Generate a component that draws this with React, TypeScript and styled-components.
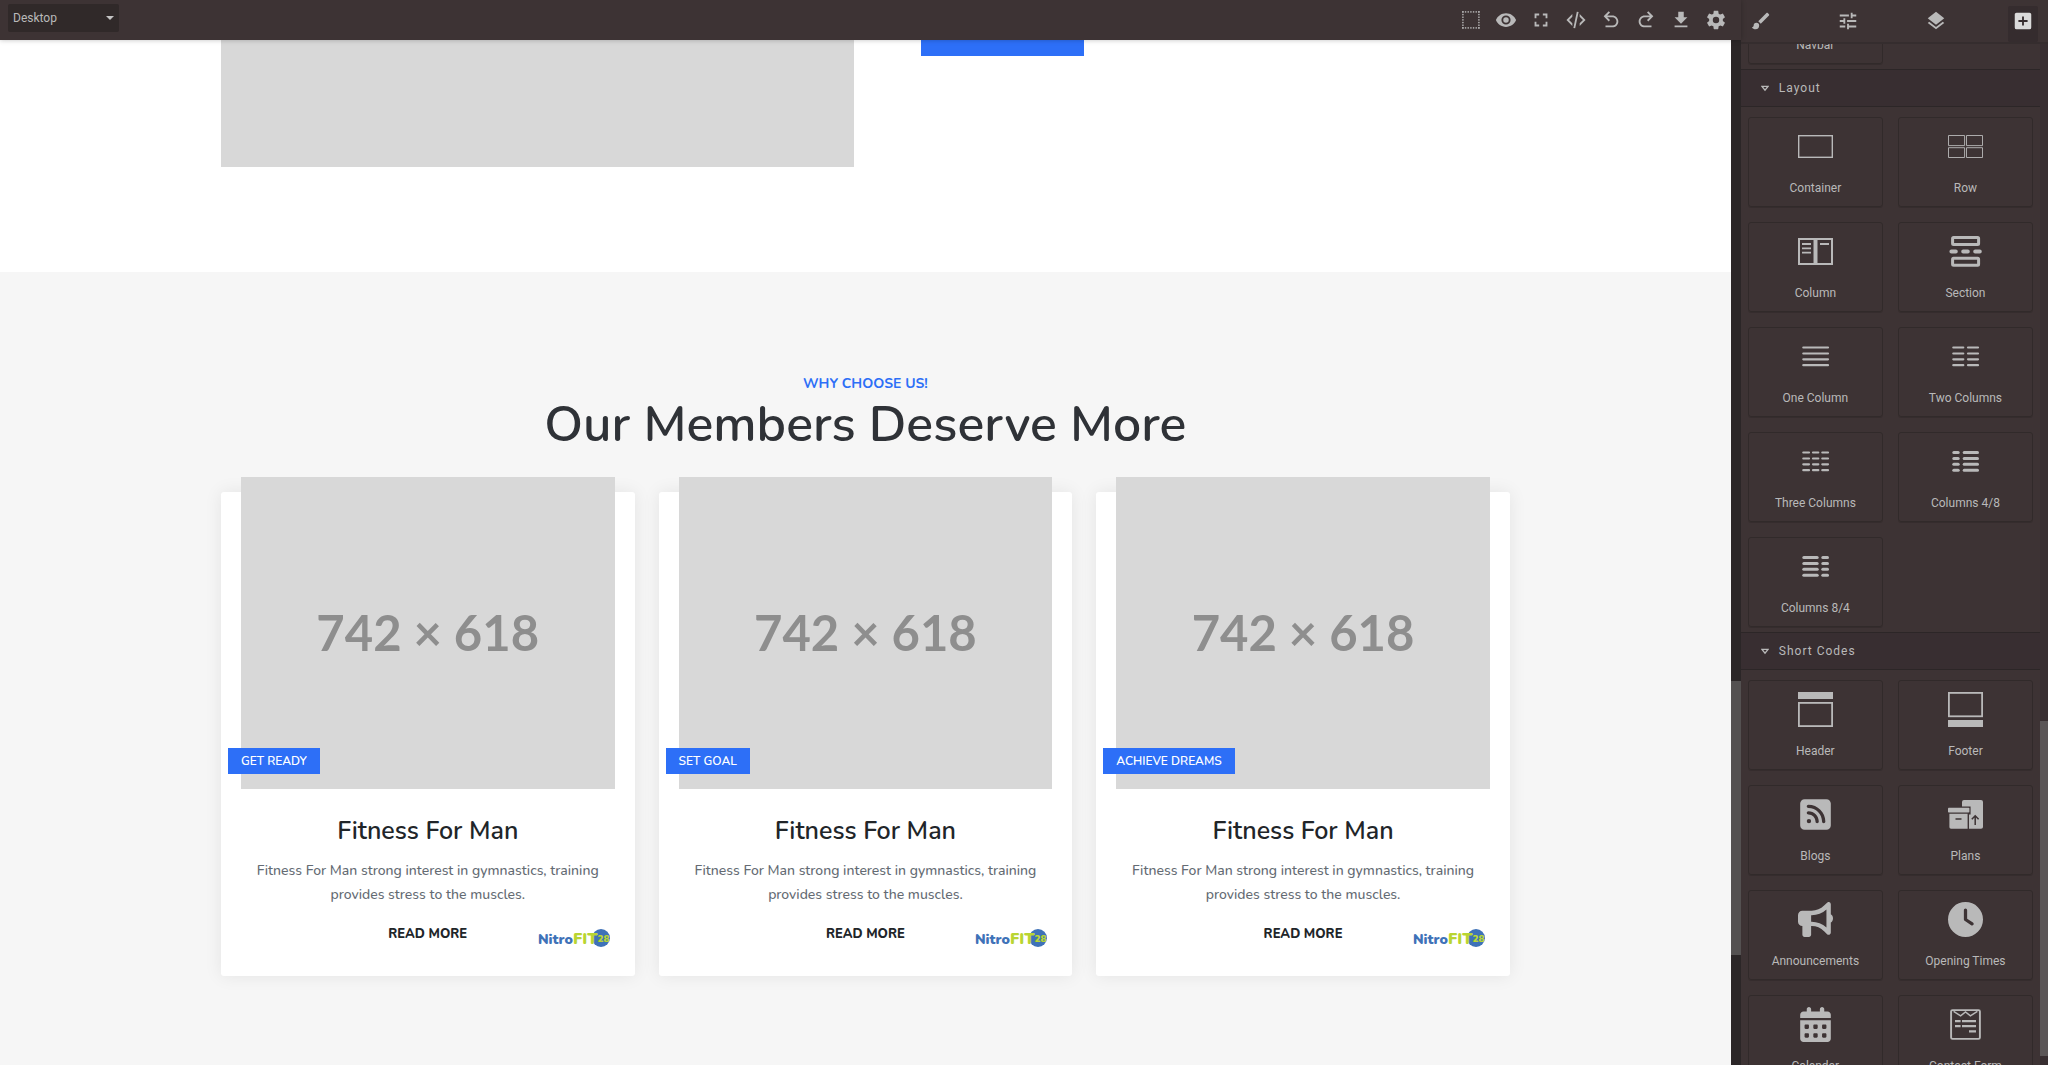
import React from "react";
import styled, { createGlobalStyle } from "styled-components";
import { FaBullhorn, FaCalendarDays, FaClock, FaSquareRss } from "react-icons/fa6";

const siteFont = `Nunito, Lato, "Open Sans", sans-serif`;
const uiFont = `Roboto, "Liberation Sans", sans-serif`;

const GlobalStyle = createGlobalStyle`
  *, *::before, *::after { box-sizing: border-box; }
  body { margin: 0; background: #3d3334; overflow: hidden; }
  h2, h3, p { margin: 0; }
`;

/* ---------- editor shell ---------- */

const Editor = styled.div`
  display: grid;
  grid-template-columns: minmax(0, 1fr) 15%;
  height: 100vh;
  background: #3d3334;
  color: #b9b9b9;
  font-family: ${uiFont};
  font-size: 12px;
`;

const Workspace = styled.div`
  display: flex;
  flex-direction: column;
  min-width: 0;
  min-height: 0;
`;

const Toolbar = styled.header`
  display: flex;
  flex: none;
  align-items: center;
  justify-content: space-between;
  height: 40px;
  padding: 0 14px 0 8px;
  background: #3d3334;
  box-shadow: 0 0 5px rgba(0, 0, 0, 0.25);
  z-index: 1;
`;

const DeviceField = styled.label`
  display: flex;
  align-items: center;
  width: 111px;
  height: 28px;
  margin-bottom: 4px;
  padding-right: 5px;
  border-radius: 2px;
  background: #302929;
`;

const DeviceSelect = styled.select`
  flex: 1;
  min-width: 0;
  padding: 0 0 0 5px;
  border: 0;
  outline: 0;
  appearance: none;
  background: transparent;
  color: #b9b9b9;
  font: 12px ${uiFont};
`;

const Caret = styled.span`
  border: 4px solid transparent;
  border-top-color: #c4c4c4;
  border-bottom-width: 0;
`;

const Tools = styled.div`
  display: flex;
  gap: 13px;
`;

const IconButton = styled.button`
  display: flex;
  padding: 0;
  border: 0;
  background: none;
  color: #b9b9b9;
`;

const TabButton = styled(IconButton)<{ $active?: boolean }>`
  padding: 4px;
  border-radius: 2px;
  background: ${(p) => (p.$active ? "#352c2e" : "transparent")};
  color: ${(p) => (p.$active ? "#dadada" : "#b9b9b9")};
`;

const Viewport = styled.div`
  display: flex;
  flex: 1;
  min-height: 0;
`;

const Track = styled.div<{ $size: number; $rows: string; $color: string }>`
  display: grid;
  flex: none;
  width: ${(p) => p.$size}px;
  grid-template-rows: ${(p) => p.$rows};
  background: ${(p) => p.$color};
`;

const Thumb = styled.div<{ $color: string }>`
  grid-row: 2;
  background: ${(p) => p.$color};
`;

/* ---------- edited page ---------- */

const Page = styled.main`
  flex: 1;
  min-width: 0;
  overflow: hidden;
  background: #fff;
  color: #212529;
  font-family: ${siteFont};
`;

const Container = styled.div`
  width: 100%;
  max-width: 1289px;
  margin: 0 auto;
`;

const Hero = styled.section`
  padding-bottom: 105px;
`;

const HeroRow = styled(Container)`
  display: grid;
  grid-template-columns: 633fr 589fr;
  gap: 67px;
  align-items: start;
`;

const HeroImage = styled.div`
  height: 127px;
  background: #d8d8d8;
`;

const HeroButton = styled.button`
  width: 163px;
  height: 16px;
  padding: 0;
  border: 0;
  background: #2d6ff7;
`;

const Features = styled.section`
  min-height: 800px;
  padding-top: 102px;
  background: #f6f6f6;
  text-align: center;
`;

const Eyebrow = styled.p`
  color: #2d6ff7;
  font-size: 14px;
  font-weight: 700;
  line-height: 20px;
`;

const Title = styled.h2`
  color: #2f3237;
  font-size: 50px;
  font-weight: 650;
  line-height: 62px;
`;

const Cards = styled.div`
  display: grid;
  grid-template-columns: repeat(3, minmax(0, 1fr));
  gap: 24px;
  margin-top: 36px;
`;

const Card = styled.article`
  padding: 0 20px 27px;
  border-radius: 3px;
  background: #fff;
  box-shadow: 0 0 18px rgba(0, 0, 0, 0.08);
`;

const Placeholder = styled.div`
  position: relative;
  display: flex;
  align-items: center;
  justify-content: center;
  margin-top: -15px;
  padding-bottom: 2px;
  aspect-ratio: 374 / 312;
  background: #d8d8d8;
  color: #8e8e8e;
  font: 700 49px Lato, sans-serif;
`;

const Badge = styled.span`
  position: absolute;
  bottom: 15px;
  left: -13px;
  padding: 0 13px;
  background: #2d6ff7;
  color: #fff;
  font: 600 12px/26px ${siteFont};
`;

const CardTitle = styled.h3`
  margin-top: 27px;
  font-size: 25px;
  font-weight: 650;
  line-height: 30px;
`;

const CardText = styled.p`
  margin-top: 13px;
  color: #646b73;
  font-size: 14px;
  font-weight: 500;
  line-height: 24px;
`;

const CardFooter = styled.div`
  display: grid;
  grid-template-columns: 1fr auto 1fr;
  height: 27px;
  margin-top: 15px;
`;

const ReadMore = styled.a`
  grid-column: 2;
  color: #212529;
  font-size: 13px;
  font-weight: 800;
  line-height: 24px;
  text-decoration: none;
`;

const LogoSvg = styled.svg`
  align-self: end;
  justify-self: end;
  margin-right: 5px;
  overflow: visible;
`;

const Logo = () => (
  <LogoSvg width="72" height="22" viewBox="0 -2 72 22" aria-label="NitroFIT28">
    <circle cx="63" cy="9" r="9" fill="#3f72b8" />
    <text x="0" y="15" fontFamily={siteFont} fontWeight="900" fontSize="14" fill="#3f72b8">
      Nitro
      <tspan fill="#b9d532" fontSize="16">FIT</tspan>
      <tspan fill="#b9d532" fontSize="10" dy="-2">28</tspan>
    </text>
  </LogoSvg>
);

/* ---------- side panel ---------- */

const Panel = styled.aside`
  display: flex;
  flex-direction: column;
  min-width: 0;
  min-height: 0;
`;

const Tabs = styled.nav`
  display: flex;
  flex: none;
  justify-content: space-between;
  height: 44px;
  padding: 6px 10px 0 5px;
  border-bottom: 2px solid #352d2e;
`;

const PanelBody = styled.div`
  display: flex;
  flex: 1;
  min-height: 0;
`;

const Blocks = styled.div`
  flex: 1;
  min-width: 0;
  overflow: hidden;
`;

const Clipped = styled.div`
  display: flex;
  flex-direction: column;
  justify-content: flex-end;
  height: 25px;
`;

const CategoryTitle = styled.h3`
  display: flex;
  align-items: center;
  gap: 10px;
  height: 38px;
  padding-left: 20px;
  border: solid #2c2627;
  border-width: 1px 0;
  background: #382e31;
  font-size: 12px;
  font-weight: 400;
  letter-spacing: 1px;
`;

const BlockGrid = styled.div`
  display: grid;
  grid-template-columns: repeat(2, minmax(0, 1fr));
  gap: 15px;
  padding: 10px 7px 5px;
`;

const Block = styled.button`
  display: flex;
  flex-direction: column;
  align-items: center;
  justify-content: flex-end;
  gap: 16px;
  height: 90px;
  padding: 11px 0 10px;
  border: 1px solid #312a2a;
  border-radius: 3px;
  background: none;
  box-shadow: 0 1px 0 rgba(0, 0, 0, 0.12);
  color: #b9b9b9;
  font: 12px/16px ${uiFont};
`;

/* ---------- icons ---------- */

const Mdi = ({ d }: { d: string }) => (
  <svg width="22" height="22" viewBox="0 0 24 24" fill="currentColor" aria-hidden="true">
    <path d={d} />
  </svg>
);

const dots = [0, 1, 2, 3, 4, 5, 6].map((n) => 2.2 + (n * 16) / 6);

const OutlineIcon = () => (
  <svg width="22" height="22" viewBox="0 0 22 22" fill="currentColor" aria-hidden="true">
    {dots.map((at) => (
      <g key={at}>
        <rect x={at} y="2.2" width="1.4" height="1.4" />
        <rect x={at} y="18.2" width="1.4" height="1.4" />
        <rect x="2.2" y={at} width="1.4" height="1.4" />
        <rect x="18.2" y={at} width="1.4" height="1.4" />
      </g>
    ))}
  </svg>
);

const tools: [string, string][] = [
  ["Preview", "M12,9A3,3 0 0,0 9,12A3,3 0 0,0 12,15A3,3 0 0,0 15,12A3,3 0 0,0 12,9M12,17A5,5 0 0,1 7,12A5,5 0 0,1 12,7A5,5 0 0,1 17,12A5,5 0 0,1 12,17M12,4.5C7,4.5 2.73,7.61 1,12C2.73,16.39 7,19.5 12,19.5C17,19.5 21.27,16.39 23,12C21.27,7.61 17,4.5 12,4.5Z"],
  ["Fullscreen", "M5,5H10V7H7V10H5V5M14,5H19V10H17V7H14V5M17,14H19V19H14V17H17V14M10,17V19H5V14H7V17H10Z"],
  ["View code", "M12.89,3L14.85,3.4L11.11,21L9.15,20.6L12.89,3M19.59,12L16,8.41V5.58L22.42,12L16,18.41V15.58L19.59,12M1.58,12L8,5.58V8.41L4.41,12L8,15.58V18.41L1.58,12Z"],
  ["Undo", "M20 13.5C20 17.09 17.09 20 13.5 20H6V18H13.5C16 18 18 16 18 13.5S16 9 13.5 9H7.83L10.91 12.09L9.5 13.5L4 8L9.5 2.5L10.92 3.91L7.83 7H13.5C17.09 7 20 9.91 20 13.5Z"],
  ["Redo", "M10.5 18H18V20H10.5C6.91 20 4 17.09 4 13.5S6.91 7 10.5 7H16.17L13.08 3.91L14.5 2.5L20 8L14.5 13.5L13.09 12.09L16.17 9H10.5C8 9 6 11 6 13.5S8 18 10.5 18Z"],
  ["Import", "M5,20H19V18H5M19,9H15V3H9V9H5L12,16L19,9Z"],
  ["Settings", "M12,15.5A3.5,3.5 0 0,1 8.5,12A3.5,3.5 0 0,1 12,8.5A3.5,3.5 0 0,1 15.5,12A3.5,3.5 0 0,1 12,15.5M19.43,12.97C19.47,12.65 19.5,12.33 19.5,12C19.5,11.67 19.47,11.34 19.43,11L21.54,9.37C21.73,9.22 21.78,8.95 21.66,8.73L19.66,5.27C19.54,5.05 19.27,4.96 19.05,5.05L16.56,6.05C16.04,5.66 15.5,5.32 14.87,5.07L14.5,2.42C14.46,2.18 14.25,2 14,2H10C9.75,2 9.54,2.18 9.5,2.42L9.13,5.07C8.5,5.32 7.96,5.66 7.44,6.05L4.95,5.05C4.73,4.96 4.46,5.05 4.34,5.27L2.34,8.73C2.21,8.95 2.27,9.22 2.46,9.37L4.57,11C4.53,11.34 4.5,11.67 4.5,12C4.5,12.33 4.53,12.65 4.57,12.97L2.46,14.63C2.27,14.78 2.21,15.05 2.34,15.27L4.34,18.73C4.46,18.95 4.73,19.03 4.95,18.95L7.44,17.94C7.96,18.34 8.5,18.68 9.13,18.93L9.5,21.58C9.54,21.82 9.75,22 10,22H14C14.25,22 14.46,21.82 14.5,21.58L14.87,18.93C15.5,18.67 16.04,18.34 16.56,17.94L19.05,18.95C19.27,19.03 19.54,18.95 19.66,18.73L21.66,15.27C21.78,15.05 21.73,14.78 21.54,14.63L19.43,12.97Z"],
];

const tabs: [string, string][] = [
  ["Styles", "M20.71,4.63L19.37,3.29C19,2.9 18.35,2.9 17.96,3.29L9,12.25L11.75,15L20.71,6.04C21.1,5.65 21.1,5 20.71,4.63M7,14A3,3 0 0,0 4,17C4,18.31 2.84,19 2,19C2.92,20.22 4.5,21 6,21A4,4 0 0,0 10,17A3,3 0 0,0 7,14Z"],
  ["Traits", "M3,17V19H9V17H3M3,5V7H13V5H3M13,21V19H21V17H13V15H11V21H13M7,9V11H3V13H7V15H9V9H7M21,13V11H11V13H21M15,9H17V7H21V5H17V3H15V9Z"],
  ["Layers", "M12,16L19.36,10.27L21,9L12,2L3,9L4.63,10.27M12,18.54L4.62,12.81L3,14.07L12,21.07L21,14.07L19.37,12.8L12,18.54Z"],
  ["Blocks", "M17,13H13V17H11V13H7V11H11V7H13V11H17M19,3H5C3.89,3 3,3.89 3,5V19A2,2 0 0,0 5,21H19A2,2 0 0,0 21,19V5C21,3.89 20.1,3 19,3Z"],
];

const Drawing = ({ children }: { children: React.ReactNode }) => (
  <svg width="35" height="35" viewBox="0 0 35 35" fill="none" stroke="currentColor" aria-hidden="true">
    {children}
  </svg>
);

const Lines = ({ spans, weight }: { spans: [number, number][]; weight: number }) => (
  <Drawing>
    {[8.5, 14.5, 20.3, 26.2].map((y) =>
      spans.map(([a, b]) => (
        <path key={`${a}-${y}`} d={`M${a + 1} ${y}H${b - 1}`} strokeWidth={weight} strokeLinecap="round" />
      ))
    )}
  </Drawing>
);

const layoutBlocks: [string, React.ReactNode][] = [
  ["Container", <Drawing><rect x="0.7" y="6.7" width="33.6" height="21.6" strokeWidth="1.4" /></Drawing>],
  ["Row", <Drawing><path d="M.5 6.5H16.6V16.6H.5ZM18.5 6.5H34.5V16.6H18.5ZM.5 18.7H16.6V28.5H.5ZM18.5 18.7H34.5V28.5H18.5Z" strokeWidth="0.9" /></Drawing>],
  ["Column", <Drawing><path d="M1 5H34V30H1Z" strokeWidth="2" /><path d="M17.5 5V30" strokeWidth="4" /><path d="M4 10H13M4 14.3H13M4 18.6H13M22 10H31" strokeWidth="1.8" /></Drawing>],
  ["Section", <Drawing><rect x="4.6" y="3.6" width="26" height="7" rx="1" strokeWidth="3" /><rect x="4.6" y="24.2" width="26" height="7" rx="1" strokeWidth="3" /><path d="M3.4 17.4H7.8M15.2 17.4H19.8M27.2 17.4H31.8" strokeWidth="4" strokeLinecap="round" /></Drawing>],
  ["One Column", <Lines weight={2.2} spans={[[4.3, 31]]} />],
  ["Two Columns", <Lines weight={2.2} spans={[[4.3, 16.3], [19, 31]]} />],
  ["Three Columns", <Lines weight={2.2} spans={[[4.3, 12], [14, 21.3], [23.3, 31]]} />],
  ["Columns 4/8", <Lines weight={3} spans={[[4.8, 11.2], [15.2, 30.5]]} />],
  ["Columns 8/4", <Lines weight={3} spans={[[4.8, 20.2], [23.8, 30.5]]} />],
];

const shortCodeBlocks: [string, React.ReactNode][] = [
  ["Header", <Drawing><rect width="35" height="7" fill="currentColor" stroke="none" /><rect x="0.9" y="10.9" width="33.2" height="23.2" strokeWidth="1.8" /></Drawing>],
  ["Footer", <Drawing><rect x="0.9" y="0.9" width="33.2" height="23.4" strokeWidth="1.8" /><rect y="28" width="35" height="7" fill="currentColor" stroke="none" /></Drawing>],
  ["Blogs", <FaSquareRss size={35} />],
  ["Plans", (
    <Drawing>
      <g fill="currentColor" stroke="none">
        <path d="M16 3H33Q35 3 35 5V30Q35 31.8 33 31.8H21V17.5H22.6V9.4H14V5Q14 3 16 3Z" />
        <rect y="10.8" width="21.4" height="4.8" rx="0.8" />
        <path d="M1.4 16.8H19.6V31.8H3Q1.4 31.8 1.4 30Z" />
      </g>
      <path d="M7.5 22H13.5M27.2 28V19M23.8 22.2L27.2 18.8L30.6 22.2" stroke="#3d3334" strokeWidth="1.5" />
    </Drawing>
  )],
  ["Announcements", <FaBullhorn size={35} />],
  ["Opening Times", <FaClock size={35} />],
  ["Calendar", <FaCalendarDays size={35} />],
  ["Contact Form", (
    <Drawing>
      <rect x="3.1" y="3.1" width="28.8" height="28.8" rx="1.4" strokeWidth="1.9" />
      <path d="M5.6 4.4L12.6 8.8L17.5 5L22.4 8.8L29.4 4.4" strokeWidth="1.5" />
      <path d="M7 14.2H12.6M14 14.2H28M7 19.2H12.6M14 19.2H28M21 24.3H28" strokeWidth="2.2" />
    </Drawing>
  )],
];

const BlockList = ({ blocks }: { blocks: [string, React.ReactNode][] }) => (
  <BlockGrid>
    {blocks.map(([name, icon]) => (
      <Block key={name} type="button">
        {icon}
        {name}
      </Block>
    ))}
  </BlockGrid>
);

const Category = ({ title, blocks }: { title: string; blocks: [string, React.ReactNode][] }) => (
  <section>
    <CategoryTitle>
      <svg width="8" height="7" viewBox="0 0 8 7" fill="none" stroke="currentColor" strokeWidth="1.3" aria-hidden="true">
        <path d="M1 1.4H7L4 5.2Z" />
      </svg>
      {title}
    </CategoryTitle>
    <BlockList blocks={blocks} />
  </section>
);

export default function App() {
  return (
    <>
      <GlobalStyle />
      <Editor>
        <Workspace>
          <Toolbar>
            <DeviceField>
              <DeviceSelect aria-label="Device" defaultValue="Desktop">
                <option>Desktop</option>
                <option>Tablet</option>
                <option>Mobile</option>
              </DeviceSelect>
              <Caret />
            </DeviceField>
            <Tools>
              <IconButton type="button" aria-label="Show outlines">
                <OutlineIcon />
              </IconButton>
              {tools.map(([name, d]) => (
                <IconButton key={name} type="button" aria-label={name}>
                  <Mdi d={d} />
                </IconButton>
              ))}
            </Tools>
          </Toolbar>
          <Viewport>
            <Page>
              <Hero>
                <HeroRow>
                  <HeroImage />
                  <HeroButton type="button" aria-label="Get started" />
                </HeroRow>
              </Hero>
              <Features>
                <Container>
                  <Eyebrow>WHY CHOOSE US!</Eyebrow>
                  <Title>Our Members Deserve More</Title>
                  <Cards>
                    {["GET READY", "SET GOAL", "ACHIEVE DREAMS"].map((label) => (
                      <Card key={label}>
                        <Placeholder>
                          742 × 618
                          <Badge>{label}</Badge>
                        </Placeholder>
                        <CardTitle>Fitness For Man</CardTitle>
                        <CardText>
                          Fitness For Man strong interest in gymnastics, training provides stress to the muscles.
                        </CardText>
                        <CardFooter>
                          <ReadMore href="#">READ MORE</ReadMore>
                          <Logo />
                        </CardFooter>
                      </Card>
                    ))}
                  </Cards>
                </Container>
              </Features>
            </Page>
            <Track $size={10} $rows="641fr 274fr 110fr" $color="#2b2627">
              <Thumb $color="#545151" />
            </Track>
          </Viewport>
        </Workspace>
        <Panel>
          <Tabs>
            {tabs.map(([name, d]) => (
              <TabButton key={name} type="button" aria-label={name} $active={name === "Blocks"}>
                <Mdi d={d} />
              </TabButton>
            ))}
          </Tabs>
          <PanelBody>
            <Blocks>
              <Clipped>
                <BlockList blocks={[["Navbar", null]]} />
              </Clipped>
              <Category title="Layout" blocks={layoutBlocks} />
              <Category title="Short Codes" blocks={shortCodeBlocks} />
            </Blocks>
            <Track $size={8} $rows="677fr 335fr 9fr" $color="#382e31">
              <Thumb $color="#5b5657" />
            </Track>
          </PanelBody>
        </Panel>
      </Editor>
    </>
  );
}
